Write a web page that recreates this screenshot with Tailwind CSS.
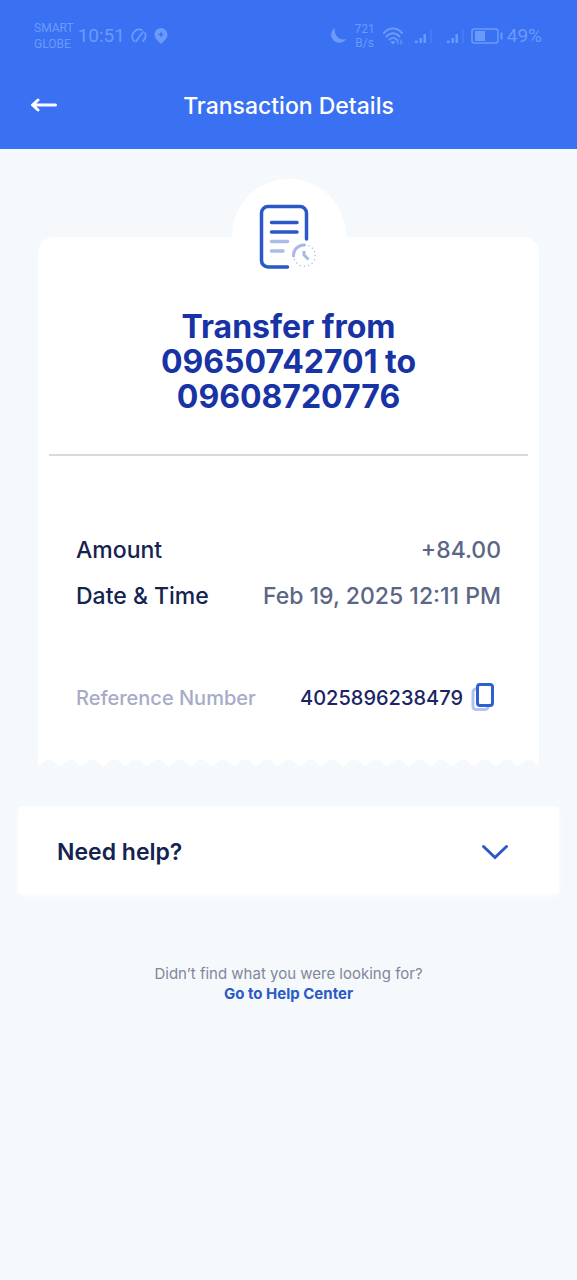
<!DOCTYPE html>
<html lang="en">
<head>
<meta charset="utf-8">
<meta name="viewport" content="width=device-width, initial-scale=1">
<title>Transaction Details</title>
<script src="https://cdn.jsdelivr.net/npm/@tailwindcss/browser@4"></script>
</head>
<body class="min-h-screen bg-[#f5f9fc] font-['Inter',sans-serif] text-[#14234f]">
<header class="bg-[#3a71f2] text-white">
  <div class="flex items-center justify-between pl-[34px] pr-[35px] pt-5 text-[#6a9afa]">
    <div class="flex items-center gap-1 font-['Roboto',sans-serif]">
      <div class="text-xs leading-4">SMART<br>GLOBE</div>
      <div class="text-[19px] leading-8">10:51</div>
      <svg class="ml-[2px] size-4" viewBox="0 0 16 16" fill="none" stroke="currentColor" stroke-width="1.800" stroke-linecap="round"><path d="M3 13a7 7 0 0 1 8-11M14 5a7 7 0 0 1-2 8M7 10.500 12 4M5 13.500l2-3"/></svg>
      <svg class="ml-[3px] h-4 w-[14px]" viewBox="0 0 14 16" fill="currentColor" fill-rule="evenodd"><path d="M7 0a6.500 6.500 0 0 1 6.500 6.500C13.500 10.500 9 14 7 16 5 14 .5 10.500 .5 6.500A6.500 6.500 0 0 1 7 0ZM7 3.600 8 5.600 10 6.500 8 7.400 7 9.400 6 7.400 4 6.500 6 5.600Z"/></svg>
    </div>
    <div class="flex items-center font-['Roboto',sans-serif]">
      <svg class="size-4" viewBox="0 0 16 16" fill="currentColor"><path d="M5 0A8 8 0 1 0 16 11C10 13 3.500 8 5 0Z"/></svg>
      <div class="ml-2 text-center text-xs leading-[14px]">721<br>B/s</div>
      <svg class="ml-2 h-[18px] w-5" viewBox="0 0 20 18" fill="none" stroke="currentColor" stroke-width="2" stroke-linecap="round"><path d="M1 6C6 0 14 0 19 6M3.500 9.500c4-4.500 9-4.500 13 0M6.500 12.500c2-2 5-2 7 0"/><path d="m9 15 1 1 1-1" /><path d="M15 13v4m0-4-1.500 1.500M18 17v-4m0 4 1.500-1.500" stroke-width="1"/></svg>
      <svg class="ml-3 h-4 w-[18px]" viewBox="0 0 18 16" fill="currentColor"><path d="M0 12.500h2.500V15H0zM4.500 10H7v5H4.500zM8.500 6H11v9H8.500z"/><path opacity=".25" d="M15 1h2v14h-2z"/></svg>
      <svg class="ml-[14px] h-4 w-[18px]" viewBox="0 0 18 16" fill="currentColor"><path d="M0 12.500h2.500V15H0zM4.500 10H7v5H4.500zM8.500 6H11v9H8.500z"/><path opacity=".25" d="M15 1h2v14h-2z"/></svg>
      <svg class="ml-[6px] h-4 w-8" viewBox="0 0 32 16" fill="none" stroke="currentColor"><rect x="1" y="1" width="26" height="14" rx="2.500" stroke-width="1.500"/><path fill="currentColor" stroke="none" d="M4 3h10v10H4zM29.500 4.500h2v7h-2z"/></svg>
      <div class="ml-1 text-[19px] leading-8">49%</div>
    </div>
  </div>
  <div class="grid grid-cols-[1fr_auto_1fr] items-center px-[30px] pb-[27px] pt-[38px]">
    <button type="button" aria-label="Back" class="h-8 w-7 cursor-pointer">
      <svg class="h-4 w-7" viewBox="0 0 28 16" fill="none" stroke="currentColor" stroke-width="3" stroke-linecap="round" stroke-linejoin="round"><path d="M25.500 7H3M8 2 2.500 7 8 12"/></svg>
    </button>
    <h1 class="text-[23px] font-medium leading-8">Transaction Details</h1>
  </div>
</header>

<main class="pt-[30px]">
  <section class="px-[38px]">
    <div class="mx-auto -mb-14 h-[114px] w-[114px] rounded-full bg-white">
      <svg class="h-full w-full" viewBox="0 0 114 114" fill="none" stroke="#2a58c8" stroke-width="3.500" stroke-linecap="round">
        <path d="M55.500 88H36a6.500 6.500 0 0 1-6.500-6.500V34a6.500 6.500 0 0 1 6.500-6.500h32a6.500 6.500 0 0 1 6.500 6.500v26"/>
        <path d="M39.500 43.500H65M39.500 53H65"/>
        <path stroke="#a9bde6" d="M39.500 62.500H55.500M39.500 72H51"/>
        <path stroke="#a9b9e5" stroke-width="3" d="M61.500 77a10.500 10.500 0 0 1 11-11"/>
        <circle cx="72.500" cy="76.500" r="10.800" stroke="#a9b9e5" stroke-width="1.500" stroke-dasharray="0 4.240"/>
        <path stroke="#a9b9e5" stroke-width="3" stroke-linecap="butt" d="M72 72V76l4.500 4.500"/>
      </svg>
    </div>
    <div class="rounded-t-2xl bg-white px-[11px] pt-[72px]">
      <h2 class="mx-auto max-w-[300px] text-center text-[32px] font-bold leading-[35px] text-[#1733a6]">Transfer from 09650742701 to 09608720776</h2>
      <hr class="mt-10 border-t-2 border-[#d5dbe0]">
      <dl class="px-[27px] pb-[43px] pt-[78px]">
        <div class="flex justify-between text-[23px] font-medium leading-8">
          <dt>Amount</dt><dd class="text-[#5b6686]">+84.00</dd>
        </div>
        <div class="mt-[14px] flex justify-between text-[23px] font-medium leading-8">
          <dt>Date &amp; Time</dt><dd class="text-[#5b6686]">Feb 19, 2025 12:11 PM</dd>
        </div>
        <div class="mt-[70px] flex items-center justify-between text-[20px] font-medium leading-8">
          <dt class="text-[#a6abc8]">Reference Number</dt>
          <dd class="flex items-center gap-2 pr-[6px] text-[#1b2464]">4025896238479
            <button type="button" aria-label="Copy reference number" class="cursor-pointer">
              <svg class="h-[30px] w-6" viewBox="0 0 24 30" fill="none" stroke-width="3" stroke-linejoin="round"><rect x="2" y="6" width="15" height="20.500" rx="3" stroke="#b0c4f0"/><rect x="6.500" y="1.500" width="15" height="21" rx="2.500" fill="#fff" stroke="#2f5fd0"/></svg>
            </button>
          </dd>
        </div>
      </dl>
    </div>
    <svg class="block h-[10px] w-full" aria-hidden="true">
      <defs><pattern id="teeth" width="21.800" height="10" patternUnits="userSpaceOnUse"><path fill="#fff" d="M0 0H21.800V9C19 9 16.500 3 13 3H9C5.500 3 3 9 0 9Z"/></pattern></defs>
      <rect width="100%" height="10" fill="url(#teeth)"/>
    </svg>
  </section>

  <section class="mt-10 px-[18px]">
    <button type="button" aria-expanded="false" class="flex w-full cursor-pointer items-center justify-between rounded bg-white pb-[26px] pl-[39px] pr-[50px] pt-[29px] text-[23px] font-semibold leading-8 shadow-[0_2px_8px_rgba(255,255,255,0.8)]">
      Need help?
      <svg class="h-4 w-7" viewBox="0 0 28 16" fill="none" stroke="#2c59c6" stroke-width="3" stroke-linecap="round"><path d="m2.500 2.500 11.500 11 11.500-11"/></svg>
    </button>
  </section>

  <p class="mt-[70px] text-center text-[15px] leading-5 text-[#81879a]">Didn’t find what you were looking for?<br><a href="#help" class="font-bold text-[#2c59c6]">Go to Help Center</a></p>
</main>
</body>
</html>
